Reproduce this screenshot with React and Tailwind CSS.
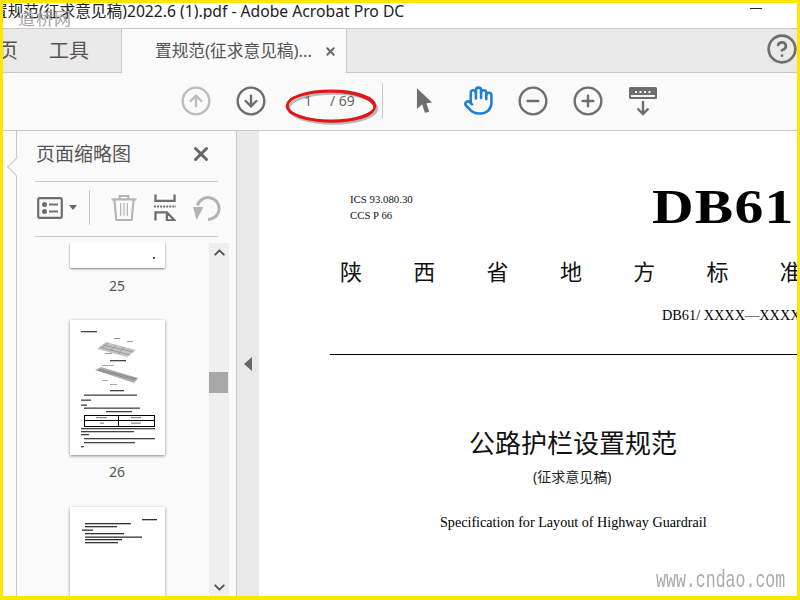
import React from 'react';
import { CircleArrowUp, CircleArrowDown, CircleMinus, CirclePlus, CircleHelp, Hand, ChevronUp, ChevronDown, X } from 'lucide-react';

const UI_FONT = "font-['Noto_Sans','Noto_Sans_CJK_SC',sans-serif]";
const DOC_FONT = "font-['Liberation_Serif','Noto_Sans_CJK_SC',serif]";

const CursorIcon = () => (
  <svg width="17" height="27" viewBox="0 0 18 28" className="shrink-0">
    <path d="M1 1 L17 16 L11 17 L14 26 L9.500 27 L6.500 18 L1 23 Z" fill="#6e6e6e" />
  </svg>
);

const ReadoutIcon = () => (
  <svg width="28" height="30" viewBox="0 0 28 30" className="shrink-0">
    <rect x="0" y="1" width="28" height="12" rx="1.500" fill="#6e6e6e" />
    <rect x="2" y="9" width="24" height="2" fill="#fafafa" />
    <path d="M6 5h2v2H6zM10.500 5h2v2h-2zM15 5h2v2h-2zM19.500 5h2v2h-2z" fill="#fafafa" />
    <path d="M14 15v13M8.500 22.500 14 28l5.500-5.500" stroke="#6e6e6e" strokeWidth="2.400" fill="none" />
  </svg>
);

const ListViewIcon = () => (
  <svg width="26" height="22" viewBox="0 0 26 22" className="shrink-0">
    <rect x="1.200" y="1.200" width="23.600" height="19.600" rx="1.500" fill="none" stroke="#6e6e6e" strokeWidth="2.200" />
    <circle cx="7.500" cy="7.500" r="2.500" fill="#6e6e6e" />
    <circle cx="7.500" cy="14.500" r="2.500" fill="#6e6e6e" />
    <path d="M12 7.500h9M12 14.500h9" stroke="#6e6e6e" strokeWidth="2.200" />
  </svg>
);

const TrashIcon = () => (
  <svg width="26" height="28" viewBox="0 0 27 28" className="shrink-0">
    <path d="M0.500 5h26M9 5V1.500h9V5" stroke="#b4b4b4" strokeWidth="2.200" fill="none" />
    <path d="M3.500 5 5.500 26.500h16L23.500 5" stroke="#b4b4b4" strokeWidth="2.200" fill="none" />
    <path d="M10 9v13M13.500 9v13M17 9v13" stroke="#b4b4b4" strokeWidth="1.300" />
  </svg>
);

const ExtractIcon = () => (
  <svg width="22" height="27" viewBox="0 0 23 27" className="shrink-0">
    <path d="M1.500 0v6.500h20V0" stroke="#6e6e6e" strokeWidth="2.400" fill="none" />
    <path d="M0 12.500h23" stroke="#6e6e6e" strokeWidth="2" strokeDasharray="2 1.200" />
    <path d="M1.500 27v-8.500h12l8 8.500h-8v-7" stroke="#6e6e6e" strokeWidth="2.400" fill="none" />
  </svg>
);

const RotateIcon = () => (
  <svg width="28" height="26" viewBox="0 0 28 26" className="shrink-0">
    <path d="M15 24.500A11 11 0 1 0 4.500 10.500" stroke="#b4b4b4" strokeWidth="3" fill="none" />
    <path d="M0 12 10.500 12 3.500 25Z" fill="#b4b4b4" />
  </svg>
);

// the two small page previews are pictures, so they are drawn
const Preview26 = () => (
  <svg width="95" height="135" viewBox="0 0 95 135" className="block blur-[0.35px]">
    <g fill="#444">
      <rect x="11" y="11" width="16" height="1.300" />
      <polygon points="27,29 36,22 66,30 57,37" fill="#c4c4c4" />
      <path d="M30 27 60 35M33 25 63 32M38 23 32 28M46 25 40 31M54 27 48 34" stroke="#8a8a8a" strokeWidth="0.700" />
      <rect x="44" y="18" width="6" height="1" fill="#999" />
      <rect x="57" y="21" width="6" height="1" fill="#999" />
      <rect x="35" y="33" width="7" height="1" fill="#999" />
      <rect x="40" y="40" width="16" height="1.300" />
      <polygon points="25,50 31,47 68,58 64,63" fill="#b0b0b0" />
      <path d="M27 50 65 60M29 49 67 59" stroke="#777" strokeWidth="0.700" />
      <rect x="32" y="45" width="12" height="1" fill="#aaa" />
      <rect x="32" y="60" width="6" height="1" fill="#aaa" />
      <rect x="40" y="64" width="7" height="1" fill="#aaa" />
      <rect x="40" y="70" width="14" height="1.300" />
      <rect x="14" y="74.500" width="53" height="1.300" />
      <rect x="11" y="79.500" width="10" height="1.300" />
      <rect x="11" y="84.500" width="6" height="1.300" />
      <rect x="14" y="87.500" width="56" height="1.300" />
      <rect x="36" y="91" width="26" height="1.300" />
      <rect x="14" y="95" width="70" height="1" fill="#000" />
      <rect x="14" y="100" width="70" height="1" fill="#000" />
      <rect x="14" y="106" width="70" height="1" fill="#000" />
      <rect x="14" y="95" width="1" height="12" fill="#000" />
      <rect x="48" y="95" width="1" height="12" fill="#000" />
      <rect x="84" y="95" width="1" height="12" fill="#000" />
      <rect x="26" y="97" width="11" height="1.200" fill="#888" />
      <rect x="61" y="97" width="10" height="1.200" fill="#888" />
      <rect x="30" y="102.500" width="4" height="1.200" fill="#888" />
      <rect x="61" y="102.500" width="10" height="1.200" fill="#888" />
      <rect x="11" y="108" width="74" height="1.300" />
      <rect x="11" y="111" width="53" height="1.300" />
      <rect x="11" y="114" width="8" height="1.300" />
      <rect x="14" y="118" width="71" height="1.300" />
      <rect x="14" y="122" width="51" height="1.300" />
      <rect x="11" y="126" width="3" height="1.300" />
    </g>
  </svg>
);

const Preview27 = () => (
  <svg width="95" height="90" viewBox="0 0 95 90" className="block blur-[0.3px]">
    <g fill="#333">
      <rect x="72" y="12" width="15" height="1.300" />
      <rect x="15" y="16" width="46" height="1.300" />
      <rect x="15" y="19" width="32" height="1.300" />
      <rect x="12" y="22.500" width="11" height="1.300" />
      <rect x="15" y="26" width="39" height="1.300" />
      <rect x="15" y="29.500" width="57" height="1.300" />
      <rect x="15" y="32" width="37" height="1.300" />
      <rect x="15" y="35" width="33" height="1.300" />
    </g>
  </svg>
);

const ThumbnailPanel = () => (
  <div className="relative w-[220px] shrink-0 bg-[#fafafa] border-r border-[#c8c8c8] flex flex-col">
    <div className="absolute -left-[7px] top-[29px] w-[14px] h-[14px] rotate-45 bg-[#fafafa] border-l border-b border-[#c8c8c8]" />
    <div className="mx-[18px] h-[51px] border-b border-[#c8c8c8] flex items-center justify-between pb-[3px] pl-px pr-[6px]">
      <span className={`${UI_FONT} text-[19px] text-[#555] leading-none`}>页面缩略图</span>
      <X size={22} strokeWidth={3.200} className="text-[#666] mb-[2px]" />
    </div>
    <div className="mx-[18px] h-[55px] border-b border-[#c8c8c8] flex items-center pb-[3px]">
      <div className="ml-[2px] shrink-0"><ListViewIcon /></div>
      <div className="ml-[6px] shrink-0 w-0 h-0 border-x-[4px] border-x-transparent border-t-[5px] border-t-[#666]" />
      <div className="ml-[12px] shrink-0 w-px h-[35px] bg-[#c8c8c8]" />
      <div className="ml-[21px] shrink-0"><TrashIcon /></div>
      <div className="ml-[17px] shrink-0"><ExtractIcon /></div>
      <div className="ml-[17px] shrink-0"><RotateIcon /></div>
    </div>
    <div className="flex-1 min-h-0 flex pt-[6px] overflow-hidden">
      <div className="w-[192px] shrink-0 flex flex-col items-center overflow-hidden pl-[8px]">
        <div className="w-[95px] h-[25px] shrink-0 bg-white shadow-[0_1px_2px_rgba(0,0,0,0.5)] relative">
          <div className="absolute right-[10px] bottom-[9px] w-[2px] h-[2px] bg-[#555]" />
        </div>
        <div className={`${UI_FONT} text-[14px] leading-none text-[#555] mt-[11px]`}>25</div>
        <div className="mt-[27px] shrink-0 bg-white shadow-[0_1px_3px_rgba(0,0,0,0.45)]"><Preview26 /></div>
        <div className={`${UI_FONT} text-[14px] leading-none text-[#555] mt-[10px]`}>26</div>
        <div className="mt-[28px] shrink-0 bg-white shadow-[0_1px_3px_rgba(0,0,0,0.45)]"><Preview27 /></div>
      </div>
      <div className="w-[20px] shrink-0 bg-[#efefef] flex flex-col items-center">
        <ChevronUp size={17} strokeWidth={2.800} className="text-[#555] mt-[1px]" />
        <div className="w-[19px] h-[21px] bg-[#a8a8a8] mt-[111px] self-start" />
        <div className="flex-1" />
        <ChevronDown size={17} strokeWidth={2.800} className="text-[#555]" />
      </div>
    </div>
  </div>
);

const DocumentPage = () => (
  <div className={`flex-1 min-w-0 bg-white overflow-hidden ${DOC_FONT} text-black pt-[37px]`}>
    <div className="flex items-start h-[71px] pl-[91px]">
      <div className="w-[302px] shrink-0 pt-[23px] text-[10.800px] leading-[16px] text-[#111]">
        <div>ICS 93.080.30</div>
        <div>CCS P 66</div>
      </div>
      <div className="whitespace-nowrap text-[48px] leading-none font-bold tracking-[1px] pt-[15px] origin-left scale-x-[1.2]">DB61</div>
    </div>
    <div className={`flex pl-[81px] h-[32px] mt-[16px] ${UI_FONT} text-[22px] leading-[32px] whitespace-nowrap text-[#111]`}>
      {['陕', '西', '省', '地', '方', '标', '准'].map((ch) => (
        <span key={ch} className="w-[73.300px] shrink-0">{ch}</span>
      ))}
    </div>
    <div className="pl-[403px] mt-[19px] text-[14.300px] leading-[18px] whitespace-nowrap">DB61/ XXXX—XXXXX</div>
    <div className="ml-[71px] h-px bg-black mt-[30px]" />
    <div className={`pl-[210px] mt-[70px] ${UI_FONT} text-[26px] leading-[36px] whitespace-nowrap text-[#111]`}>公路护栏设置规范</div>
    <div className={`pl-[274px] mt-[6px] ${UI_FONT} text-[14px] leading-[20px] whitespace-nowrap text-[#222]`}>(征求意见稿)</div>
    <div className="pl-[181px] mt-[26px] text-[14.150px] leading-[18px] whitespace-nowrap">Specification for Layout of Highway Guardrail</div>
  </div>
);

export default function App() {
  return (
    <div className="relative w-[800px] h-[600px] overflow-hidden bg-white border-t-[3px] border-l-[3px] border-r-[3px] border-b-[4px] border-[#ffe600] flex flex-col">
      <div className="h-[26px] shrink-0 bg-white border-b border-[#c8c8c8] flex items-start overflow-hidden">
        <div className={`flex-1 min-w-0 overflow-hidden whitespace-nowrap ${UI_FONT} text-[15.700px] leading-[16px] text-[#222]`}>
          <span className="-ml-[11px] inline-block">置规范(征求意见稿)2022.6 (1).pdf - Adobe Acrobat Pro DC</span>
        </div>
        <div className="w-[12px] h-px bg-[#222] mt-[5px] mr-[35px]" />
      </div>

      <div className={`h-[44px] shrink-0 bg-[#e9e9e9] border-b border-[#c8c8c8] flex ${UI_FONT}`}>
        <div className="w-[118px] shrink-0 overflow-hidden flex items-center whitespace-nowrap text-[20px] text-[#555]">
          <span className="-ml-[25px] w-[71px] shrink-0">首页</span>
          <span>工具</span>
        </div>
        <div className="w-[226px] h-[44px] shrink-0 bg-[#fafafa] border-x border-[#c8c8c8] flex items-center pl-[33px] text-[16.700px] text-[#555] whitespace-nowrap">
          <span>置规范(征求意见稿)...</span>
          <X size={13} strokeWidth={3.500} className="text-[#666] ml-[12px]" />
        </div>
        <div className="flex-1" />
        <CircleHelp size={32} strokeWidth={2} className="text-[#6e6e6e] self-center mr-[-1px] mb-[3px]" />
      </div>

      <div className={`h-[58px] shrink-0 bg-[#fafafa] border-b border-[#c8c8c8] flex items-center pl-[177px] pb-[2px] ${UI_FONT}`}>
        <CircleArrowUp size={32} strokeWidth={1.800} className="text-[#bdbdbd] shrink-0" />
        <CircleArrowDown size={32} strokeWidth={1.800} className="text-[#6e6e6e] shrink-0 ml-[23px]" />
        <div className="w-[88px] shrink-0 ml-[18px] flex text-[14px] text-[#666] whitespace-nowrap">
          <span className="ml-[19px]">1</span>
          <span className="ml-[18px]">/ 69</span>
        </div>
        <div className="w-px h-[35px] bg-[#c8c8c8] shrink-0 ml-[9px]" />
        <div className="ml-[33px]"><CursorIcon /></div>
        <Hand size={31} strokeWidth={2} className="text-[#1f7fd1] shrink-0 ml-[30px]" />
        <CircleMinus size={32} strokeWidth={1.800} className="text-[#6e6e6e] shrink-0 ml-[23px]" />
        <CirclePlus size={32} strokeWidth={1.800} className="text-[#6e6e6e] shrink-0 ml-[23px]" />
        <div className="ml-[25px]"><ReadoutIcon /></div>
      </div>

      <div className="flex-1 min-h-0 flex">
        <div className="w-[14px] shrink-0 bg-[#fafafa] border-r border-[#c8c8c8]" />
        <ThumbnailPanel />
        <div className="w-[22px] shrink-0 bg-[#e9e9e9] flex items-center justify-center">
          <div className="w-0 h-0 border-y-[7px] border-y-transparent border-r-[8px] border-r-[#666]" />
        </div>
        <DocumentPage />
      </div>

      {/* red marker ring drawn over the page number */}
      <svg width="100" height="46" viewBox="0 0 100 46" className="absolute left-[279px] top-[81px] pointer-events-none">
        <ellipse cx="49" cy="22" rx="44" ry="15" fill="none" stroke="#777" strokeWidth="2.500" opacity="0.5" transform="translate(2 2.500)" />
        <ellipse cx="49" cy="22" rx="44" ry="15" fill="none" stroke="#e01818" strokeWidth="2.800" />
        <ellipse cx="49" cy="22.500" rx="43.500" ry="15" fill="none" stroke="#e01818" strokeWidth="2" transform="rotate(1.500 49 22)" />
      </svg>

      {/* watermarks laid over the screenshot */}
      <div className="absolute left-[15px] top-[8px] font-['Liberation_Serif','Noto_Sans_CJK_SC',serif] text-[17px] leading-none tracking-[1px] text-[#a8a8a8] pointer-events-none whitespace-nowrap">道桥网</div>
      <div className="absolute left-[653px] top-[566px] origin-left scale-x-[0.69] font-['Liberation_Mono',monospace] text-[24px] leading-none text-[#aaa] pointer-events-none whitespace-nowrap">www.cndao.com</div>
    </div>
  );
}
